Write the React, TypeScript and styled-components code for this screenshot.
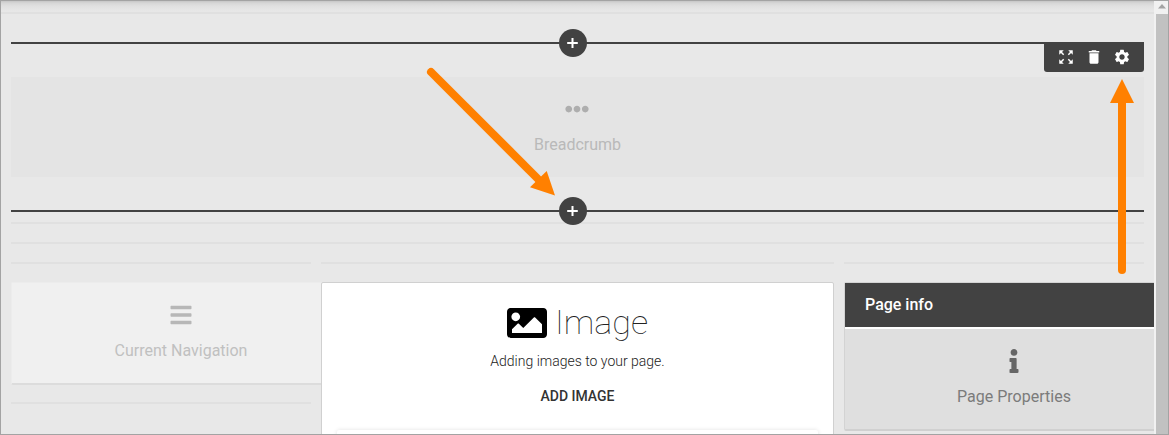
import React from 'react';
import styled, { createGlobalStyle } from 'styled-components';
import { FaBars, FaEllipsisH, FaImage, FaInfo } from 'react-icons/fa';
import { MdDelete, MdSettings, MdZoomOutMap } from 'react-icons/md';

const GlobalStyle = createGlobalStyle`
  *, *::before, *::after { box-sizing: border-box; }
  body { margin: 0; font-family: Roboto, "Liberation Sans", sans-serif; }
  svg { display: block; flex: none; }
`;

const Frame = styled.div`
  position: relative;
  display: flex;
  width: 1169px;
  height: 435px;
  border: 1px solid #a3a3a3;
  background: #e8e8e8;
  overflow: hidden;
`;

const Page = styled.main`
  width: 1153px;
  height: 433px;
  overflow: hidden;
  background: linear-gradient(#c6c6c6 0, #d6d6d6 2px, #e0e0e0 5px, #e6e6e6 9px, #e8e8e8 12px);
`;

const TopRule = styled.div`
  height: 2px;
  margin-top: 11px;
  background: #e0e0e0;
`;

const Content = styled.div`
  width: 1133px;
  margin-left: 10px;
`;

const Rule = styled.div<{ $gap?: number }>`
  height: 2px;
  margin-top: ${({ $gap = 18 }) => $gap}px;
  background: #e0e0e0;
`;

const InsertBar = styled.div`
  position: relative;
  display: flex;
  align-items: center;
  justify-content: center;
  height: 28px;
  padding-right: 9px;
  background: linear-gradient(#424242, #424242) 0 13px / 100% 2px no-repeat;
`;

const InsertButton = styled.button`
  display: flex;
  align-items: center;
  justify-content: center;
  width: 28px;
  height: 28px;
  padding: 0 1px 0 0;
  border: 0;
  border-radius: 50%;
  background: #424242;
  color: #fff;
`;

const SelectedBlock = styled.section`
  position: relative;
  margin-top: 15px;
`;

const Toolbar = styled.div`
  position: absolute;
  top: 14px;
  right: 0;
  display: flex;
  align-items: center;
  gap: 10px;
  width: 100px;
  height: 29px;
  padding: 0 0 1px 13px;
  border-radius: 0 0 3px 3px;
  background: #424242;
  color: #fff;
`;

const Widget = styled.div<{ $bg: string }>`
  display: flex;
  flex-direction: column;
  align-items: center;
  height: 100px;
  padding-top: 20px;
  background: ${({ $bg }) => $bg};
`;

const WidgetLabel = styled.span<{ $color: string }>`
  margin-top: 14px;
  font-size: 16px;
  line-height: 20px;
  color: ${({ $color }) => $color};
`;

const BreadcrumbArea = styled.div`
  margin: 20px 0;
`;

const DotsIcon = styled(FaEllipsisH)`
  margin-right: 1px;
`;

const Columns = styled.div`
  display: grid;
  grid-template-columns: 300px 513px 300px;
  column-gap: 10px;
`;

const Column = styled.div<{ $raised?: boolean }>`
  position: relative;
  z-index: ${({ $raised }) => ($raised ? 1 : 0)};
`;

const SideCard = styled.div<{ $tone: string; $edge: string; $bottom: number }>`
  width: 340px;
  margin-top: 18px;
  border: 1px solid ${({ $tone }) => $tone};
  border-bottom: ${({ $bottom }) => $bottom}px solid ${({ $edge }) => $edge};
  border-radius: 2px;
`;

const CardHeader = styled.h2`
  height: 46px;
  margin: 0;
  padding-left: 20px;
  border-bottom: 2px solid #fff;
  background: #424242;
  color: #fff;
  font-size: 16px;
  font-weight: 500;
  line-height: 43px;
`;

const ImageCard = styled.div`
  display: flex;
  flex-direction: column;
  align-items: center;
  height: 170px;
  margin-top: 18px;
  border: 1px solid #d0d0d0;
  border-radius: 2px 2px 0 0;
  background: #fff;
  color: #222;
`;

const ImageTitle = styled.div`
  display: flex;
  align-items: center;
  gap: 8px;
  height: 40px;
  margin-top: 20px;
  color: #000;
  font-size: 34px;
  font-weight: 100;
  line-height: 38px;
`;

const TitleText = styled.span`
  padding-bottom: 2px;
  color: #222;
`;

const Hint = styled.p`
  margin: 8px 0 0;
  font-size: 14px;
  font-weight: 300;
  line-height: 20px;
`;

const AddImage = styled.button`
  margin-top: 15px;
  padding: 0;
  border: 0;
  background: none;
  color: #333;
  font: 500 14px/20px Roboto, "Liberation Sans", sans-serif;
`;

const InnerPanel = styled.div`
  width: 481px;
  height: 30px;
  margin-top: 24px;
  border-radius: 2px;
  background: #fff;
  box-shadow: 0 0 4px rgba(0, 0, 0, 0.12);
`;

const Scrollbar = styled.div`
  width: 14px;
  padding-left: 2px;
  background: #f1f1f1;
`;

const ScrollUp = styled.div`
  display: flex;
  justify-content: center;
  height: 13px;
  padding-top: 3px;
`;

const ScrollThumb = styled.div`
  height: 420px;
  background: #c1c1c1;
`;

const Annotations = styled.svg`
  position: absolute;
  top: -1px;
  left: -1px;
  z-index: 2;
  pointer-events: none;
`;

function Insert() {
  return (
    <InsertBar>
      <InsertButton aria-label="Add">
        <svg width="11" height="10" viewBox="0 0 11 10" stroke="#fff" strokeWidth="2">
          <path d="M0.2 5h10.6M5.5 0v10" />
        </svg>
      </InsertButton>
    </InsertBar>
  );
}

export default function App() {
  return (
    <Frame>
      <GlobalStyle />
      <Page>
        <TopRule />
        <Content>
          <SelectedBlock>
            <Insert />
            <Toolbar>
              <MdZoomOutMap size={18} />
              <MdDelete size={18} />
              <MdSettings size={18} />
            </Toolbar>
            <BreadcrumbArea>
              <Widget $bg="#e4e4e4">
                <DotsIcon size={24} color="#aeaeae" />
                <WidgetLabel $color="#b9b9b9">Breadcrumb</WidgetLabel>
              </Widget>
            </BreadcrumbArea>
            <Insert />
          </SelectedBlock>
          <Rule $gap={-3} />
          <Rule />
          <Columns>
            <Column>
              <Rule />
              <SideCard $tone="#ececec" $edge="#dcdcdc" $bottom={2}>
                <Widget $bg="#f0f0f0">
                  <FaBars size={24} color="#b7b7b7" />
                  <WidgetLabel $color="#c0c0c0">Current Navigation</WidgetLabel>
                </Widget>
              </SideCard>
              <Rule $gap={17} />
            </Column>
            <Column $raised>
              <Rule />
              <ImageCard>
                <ImageTitle>
                  <FaImage size={40} />
                  <TitleText>Image</TitleText>
                </ImageTitle>
                <Hint>Adding images to your page.</Hint>
                <AddImage>ADD IMAGE</AddImage>
                <InnerPanel />
              </ImageCard>
            </Column>
            <Column>
              <Rule />
              <SideCard $tone="#d3d3d3" $edge="#d0d0d0" $bottom={2}>
                <CardHeader>Page info</CardHeader>
                <Widget $bg="#dfdfdf">
                  <FaInfo size={24} color="#666" />
                  <WidgetLabel $color="#7b7b7b">Page Properties</WidgetLabel>
                </Widget>
              </SideCard>
            </Column>
          </Columns>
        </Content>
      </Page>
      <Scrollbar>
        <ScrollUp>
          <svg width="8" height="5" viewBox="0 0 8 5">
            <path d="M0 4.5 4 0l4 4.5z" fill="#a3a3a3" />
          </svg>
        </ScrollUp>
        <ScrollThumb />
      </Scrollbar>
      <Annotations width="1169" height="435" viewBox="0 0 1169 435" fill="#ff8000">
        <g stroke="#ff8000" strokeWidth="8" strokeLinecap="round">
          <path d="M431 72 540 181" />
          <path d="M1122 270V100" />
        </g>
        <path d="M555 195.5 546.7 171 530 187.3z" />
        <path d="M1122 79l12 24h-24z" />
      </Annotations>
    </Frame>
  );
}
